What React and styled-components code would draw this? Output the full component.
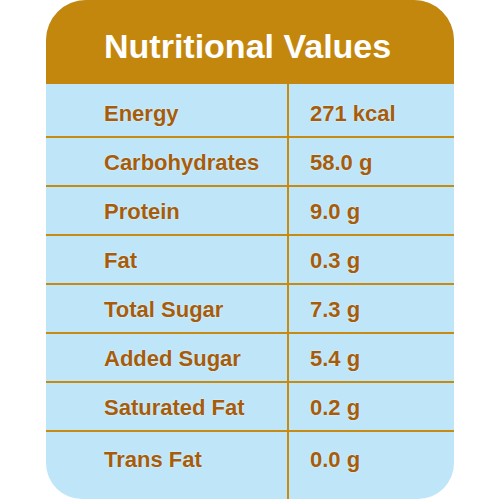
import React from "react";
import styled, { createGlobalStyle } from "styled-components";

const GlobalStyle = createGlobalStyle`
  html, body {
    margin: 0;
    padding: 0;
    background: #ffffff;
  }
  body {
    font-family: "Liberation Sans", Arial, sans-serif;
  }
`;

const Page = styled.div`
  width: 500px;
  height: 500px;
  display: flex;
  justify-content: center;
`;

const Card = styled.div`
  width: 408px;
  height: 499px;
  border-radius: 40px 40px 36px 36px;
  overflow: hidden;
  background: #bee5f8;
  display: flex;
  flex-direction: column;
`;

const Header = styled.div`
  height: 84px;
  background: #c4870d;
  color: #ffffff;
  font-size: 34px;
  font-weight: bold;
  display: flex;
  align-items: center;
  padding: 8px 0 0 58px;
  box-sizing: border-box;
`;

const Table = styled.div`
  flex: 1;
  display: flex;
  flex-direction: column;
`;

const Row = styled.div`
  display: grid;
  grid-template-columns: 241px 2px 1fr;
  height: ${(p) => p.$h}px;
  flex: ${(p) => (p.$last ? 1 : "none")};
  border-bottom: ${(p) => (p.$last ? "none" : "2px solid #c78b12")};
  box-sizing: border-box;
`;

const Cell = styled.div`
  display: flex;
  align-items: ${(p) => (p.$last ? "flex-start" : "center")};
  padding: ${(p) => p.$top}px 0 0 ${(p) => p.$pad}px;
  color: #a65c0b;
  font-size: 22px;
  font-weight: bold;
  text-shadow: 0 0 2px #e8fbff;
  box-sizing: border-box;
`;

const Divider = styled.div`
  background: #c78b12;
`;

const rows = [
  ["Energy", "271 kcal"],
  ["Carbohydrates", "58.0 g"],
  ["Protein", "9.0 g"],
  ["Fat", "0.3 g"],
  ["Total Sugar", "7.3 g"],
  ["Added Sugar", "5.4 g"],
  ["Saturated Fat", "0.2 g"],
  ["Trans Fat", "0.0 g"]
];

const App = () => (
  <Page>
    <GlobalStyle />
    <Card>
      <Header>Nutritional Values</Header>
      <Table>
        {rows.map(([name, value], i) => {
          const last = i === rows.length - 1;
          const top = i === 0 ? 8 : last ? 15 : 3;
          return (
            <Row key={name} $h={i === 0 ? 54 : 49} $last={last}>
              <Cell $pad={58} $top={top} $last={last}>{name}</Cell>
              <Divider />
              <Cell $pad={21} $top={top} $last={last}>{value}</Cell>
            </Row>
          );
        })}
      </Table>
    </Card>
  </Page>
);

export default App;
